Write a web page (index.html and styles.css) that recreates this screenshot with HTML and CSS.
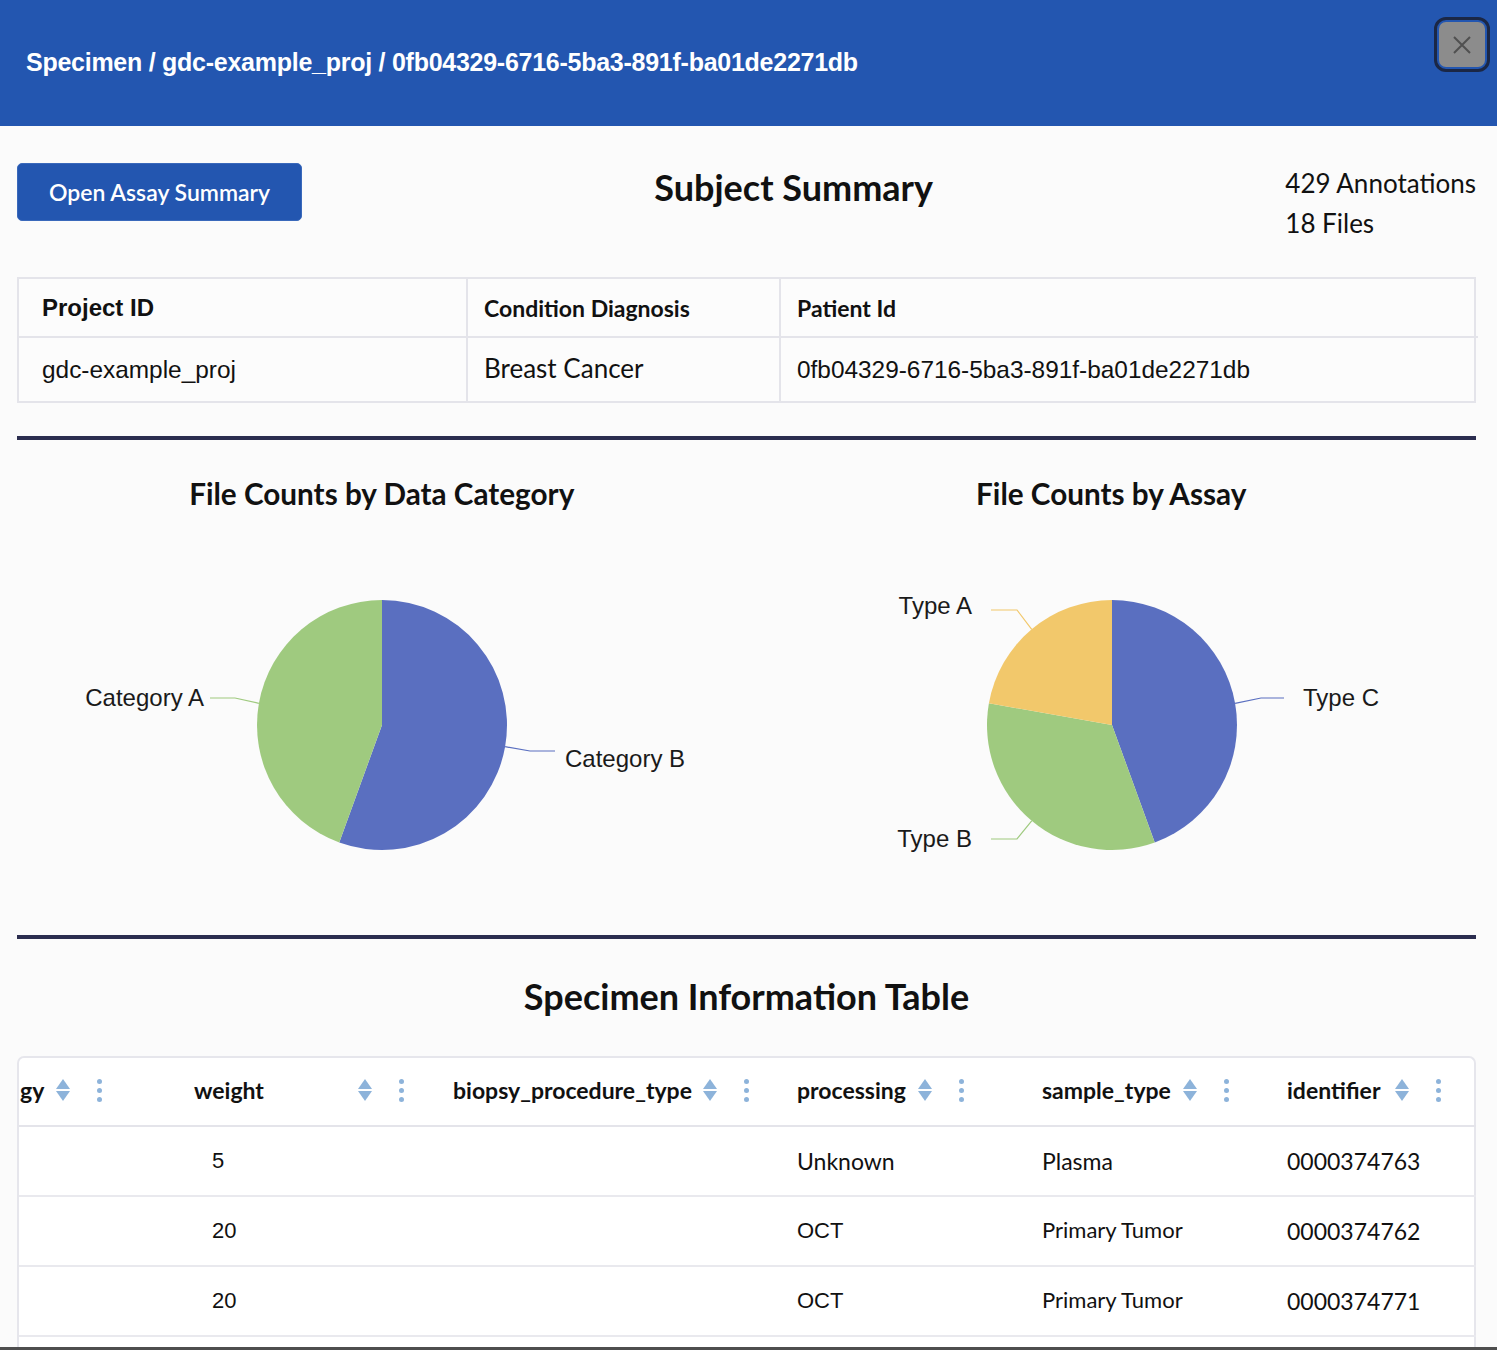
FILE: index.html
```html
<!DOCTYPE html>
<html lang="en">
<head>
<meta charset="utf-8">
<title>Specimen</title>
<link rel="stylesheet" href="styles.css">
</head>
<body>
<div class="page">
  <header class="topbar">
    <h1 class="crumbs">Specimen / gdc-example_proj / 0fb04329-6716-5ba3-891f-ba01de2271db</h1>
    <button class="close-btn" aria-label="Close">
      <svg width="20" height="20" viewBox="0 0 20 20"><path d="M2 2 L18 18 M18 2 L2 18" stroke="#505050" stroke-width="2" fill="none"/></svg>
    </button>
  </header>

  <main class="content">
    <section class="summary-row">
      <button class="assay-btn">Open Assay Summary</button>
      <h2 class="summary-title">Subject Summary</h2>
      <div class="counts">
        <div>429 Annotations</div>
        <div>18 Files</div>
      </div>
    </section>

    <div class="info-table">
      <div class="info-cell head c-proj"><span class="arial-b">Project ID</span></div>
      <div class="info-cell head">Condition Diagnosis</div>
      <div class="info-cell head">Patient Id</div>
      <div class="info-cell body c-proj"><span class="arial">gdc-example_proj</span></div>
      <div class="info-cell body lato-lg">Breast Cancer</div>
      <div class="info-cell body"><span class="arial">0fb04329-6716-5ba3-891f-ba01de2271db</span></div>
    </div>

    <hr class="divider">

    <section class="charts">
      <div class="chart">
        <h3 class="chart-title">File Counts by Data Category</h3>
        <svg class="pie" width="729" height="360" viewBox="0 0 729 360">
          <path d="M365,184 L365,59 A125,125 0 1 1 322.25,301.46 Z" fill="#5a6fc0"/>
          <path d="M365,184 L322.25,301.46 A125,125 0 0 1 365,59 Z" fill="#9fca7f"/>
          <polyline points="241.9,162.3 218,157 193,157" fill="none" stroke="#9fca7f" stroke-width="1.2"/>
          <polyline points="488.1,205.7 513,210 538,210" fill="none" stroke="#5a6fc0" stroke-width="1.2"/>
          <text x="187" y="156" text-anchor="end" dominant-baseline="central" class="lbl">Category A</text>
          <text x="548" y="217" dominant-baseline="central" class="lbl">Category B</text>
        </svg>
      </div>
      <div class="chart">
        <h3 class="chart-title">File Counts by Assay</h3>
        <svg class="pie" width="729" height="360" viewBox="0 0 729 360">
          <path d="M365,184 L365,59 A125,125 0 0 1 407.75,301.46 Z" fill="#5a6fc0"/>
          <path d="M365,184 L407.75,301.46 A125,125 0 0 1 241.9,162.3 Z" fill="#9fca7f"/>
          <path d="M365,184 L241.9,162.3 A125,125 0 0 1 365,59 Z" fill="#f2c86b"/>
          <polyline points="488.1,162.3 514,157 537,157" fill="none" stroke="#5a6fc0" stroke-width="1.2"/>
          <polyline points="284.7,279.8 270,298 244,298" fill="none" stroke="#9fca7f" stroke-width="1.2"/>
          <polyline points="284.7,88.3 270,69 244,69" fill="none" stroke="#f2c86b" stroke-width="1.2"/>
          <text x="556" y="156" dominant-baseline="central" class="lbl">Type C</text>
          <text x="225" y="297" text-anchor="end" dominant-baseline="central" class="lbl">Type B</text>
          <text x="225" y="64" text-anchor="end" dominant-baseline="central" class="lbl">Type A</text>
        </svg>
      </div>
    </section>

    <hr class="divider">

    <h2 class="table-title">Specimen Information Table</h2>

    <div class="grid-card">
      <div class="grid">
        <div class="gh col1"><span class="gl">gy</span><span class="tools"><span class="sort"></span><span class="kebab"><i></i><i></i><i></i></span></span></div>
        <div class="gh col2"><span class="gl">weight</span><span class="tools"><span class="sort"></span><span class="kebab"><i></i><i></i><i></i></span></span></div>
        <div class="gh col3"><span class="gl">biopsy_procedure_type</span><span class="tools"><span class="sort"></span><span class="kebab"><i></i><i></i><i></i></span></span></div>
        <div class="gh col4"><span class="gl">processing</span><span class="tools"><span class="sort"></span><span class="kebab"><i></i><i></i><i></i></span></span></div>
        <div class="gh col5"><span class="gl">sample_type</span><span class="tools"><span class="sort"></span><span class="kebab"><i></i><i></i><i></i></span></span></div>
        <div class="gh col6"><span class="gl">identifier</span><span class="tools"><span class="sort"></span><span class="kebab"><i></i><i></i><i></i></span></span></div>
        <div class="gh filler"></div>

        <div class="gc col1"></div>
        <div class="gc col2 num">5</div>
        <div class="gc col3"></div>
        <div class="gc col4 lato">Unknown</div>
        <div class="gc col5 lato">Plasma</div>
        <div class="gc col6 lato">0000374763</div>
        <div class="gc filler"></div>

        <div class="gc col1"></div>
        <div class="gc col2 num">20</div>
        <div class="gc col3"></div>
        <div class="gc col4 num">OCT</div>
        <div class="gc col5 lato-sm">Primary Tumor</div>
        <div class="gc col6 lato">0000374762</div>
        <div class="gc filler"></div>

        <div class="gc col1"></div>
        <div class="gc col2 num">20</div>
        <div class="gc col3"></div>
        <div class="gc col4 num">OCT</div>
        <div class="gc col5 lato-sm">Primary Tumor</div>
        <div class="gc col6 lato">0000374771</div>
        <div class="gc filler"></div>

        <div class="gc col1"></div>
        <div class="gc col2"></div>
        <div class="gc col3"></div>
        <div class="gc col4"></div>
        <div class="gc col5"></div>
        <div class="gc col6"></div>
        <div class="gc filler"></div>
      </div>
    </div>
  </main>
</div>
</body>
</html>
```

FILE: styles.css
```css
* { box-sizing: border-box; }
html, body { margin: 0; padding: 0; }
body {
  background: #fbfbfb;
  font-family: Lato, "Liberation Sans", Arial, sans-serif;
  color: #111;
}
.page {
  width: 1497px;
  height: 1350px;
  overflow: hidden;
  border-bottom: 3px solid #4e4e4e;
  background: #fbfbfb;
}
.topbar {
  height: 126px;
  background: #2356b0;
  display: flex;
  justify-content: space-between;
  align-items: flex-start;
}
.crumbs {
  margin: 0;
  padding-left: 26px;
  margin-top: 47px;
  font-family: "Liberation Sans", Arial, sans-serif;
  font-weight: 700;
  font-size: 25px;
  line-height: 30px;
  color: #fff;
  letter-spacing: -0.26px;
}
.close-btn {
  margin-top: 22px;
  margin-right: 12px;
  width: 46px;
  height: 45px;
  border: none;
  border-radius: 7px;
  background: #8c8c8c;
  outline: 3px solid #1b2745;
  outline-offset: 2px;
  display: flex;
  align-items: center;
  justify-content: center;
  padding: 0;
}
.content {
  margin-left: 17px;
  width: 1459px;
}
.summary-row {
  display: flex;
  justify-content: space-between;
  align-items: flex-start;
  padding-top: 37px;
}
.assay-btn {
  width: 285px;
  height: 58px;
  background: #2356b0;
  border: 1px solid #3a69bb;
  border-radius: 5px;
  color: #fff;
  font-family: Lato, sans-serif;
  font-size: 23px;
  font-weight: 600;
  padding: 0;
}
.summary-title {
  margin: 2px 0 0;
  font-size: 36px;
  line-height: 44px;
  font-weight: 700;
}
.counts {
  font-size: 26px;
  line-height: 40px;
  margin-top: 0;
}
.info-table {
  margin-top: 34px;
  display: grid;
  grid-template-columns: 449px 313px 697px;
  border: 2px solid #e4e4ea;
  background: #fcfcfc;
}
.info-cell {
  border-right: 2px solid #e4e4ea;
  display: flex;
  align-items: center;
}
.info-cell:nth-child(3n) { border-right: none; }
.info-cell.head {
  height: 59px;
  border-bottom: 2px solid #e4e4ea;
  padding-left: 16px;
  font-weight: 700;
  font-size: 23px;
}
.info-cell.body {
  height: 63px;
  padding-left: 16px;
  font-size: 22px;
}
.info-cell.c-proj { padding-left: 23px; }
.arial-b {
  font-family: "Liberation Sans", Arial, sans-serif;
  font-weight: 700;
  font-size: 24px;
}
.arial {
  font-family: "Liberation Sans", Arial, sans-serif;
  font-size: 24.4px;
}
.info-cell.body.lato-lg { font-size: 26px; padding-bottom: 3px; }
.divider {
  margin: 33px 0 0;
  height: 4px;
  border: none;
  background: #2b2d4f;
}
.charts {
  display: flex;
}
.chart {
  width: 729.5px;
  display: flex;
  flex-direction: column;
  align-items: center;
}
.chart-title {
  margin: 36px 0 0;
  font-size: 29.7px;
  line-height: 36px;
  font-weight: 700;
}
.pie {
  display: block;
  margin-top: 29px;
  align-self: flex-start;
}
.lbl {
  font-family: "Liberation Sans", Arial, sans-serif;
  font-size: 24px;
  fill: #1a1a1a;
}
.charts + .divider { margin-top: 34px; }
.table-title {
  margin: 35px 0 0;
  text-align: center;
  font-size: 36px;
  line-height: 44px;
  font-weight: 700;
}
.grid-card {
  margin-top: 38px;
  border: 2px solid #e6e6ec;
  border-bottom: none;
  border-radius: 7px 7px 0 0;
  background: #fff;
  height: 400px;
}
.grid {
  display: grid;
  grid-template-columns: 101px 300px 345px 215px 265px 212px 19px;
}
.gh {
  height: 69px;
  border-bottom: 2px solid #e4e4ea;
  display: flex;
  align-items: center;
  font-weight: 700;
  font-size: 23px;
  padding-bottom: 3px;
}
.gc {
  height: 70px;
  border-bottom: 2px solid #e9e9ee;
  display: flex;
  align-items: center;
  font-size: 23px;
}
.gl { white-space: nowrap; }
.tools {
  margin-left: auto;
  display: flex;
  align-items: center;
  padding-right: 16px;
}
.gh.col1 .tools { padding-right: 18px; }
.sort {
  width: 14px;
  height: 24px;
  position: relative;
  margin-right: 27px;
}
.sort::before, .sort::after {
  content: "";
  position: absolute;
  left: 0;
  border-left: 7px solid transparent;
  border-right: 7px solid transparent;
}
.sort::before { top: 1px; border-bottom: 10px solid #8db3da; }
.sort::after { bottom: 1px; border-top: 10px solid #8db3da; }
.kebab {
  display: flex;
  flex-direction: column;
  gap: 4px;
}
.kebab i {
  display: block;
  width: 5px;
  height: 5px;
  border-radius: 50%;
  background: #8db3da;
}
.gh.col1 { padding-left: 1px; }
.gh.col2 { padding-left: 74px; }
.gh.col3 { padding-left: 33px; }
.gh.col4 { padding-left: 32px; }
.gh.col5 { padding-left: 62px; }
.gh.col6 { padding-left: 42px; }
.gc.col2 { padding-left: 92px; }
.gc.col4 { padding-left: 32px; }
.gc.col5 { padding-left: 62px; }
.gc.col6 { padding-left: 42px; }
.num {
  font-family: "Liberation Sans", Arial, sans-serif;
  font-size: 22px;
}
.lato { font-size: 23px; }
.lato-sm { font-size: 22px; padding-bottom: 3px; }
```
